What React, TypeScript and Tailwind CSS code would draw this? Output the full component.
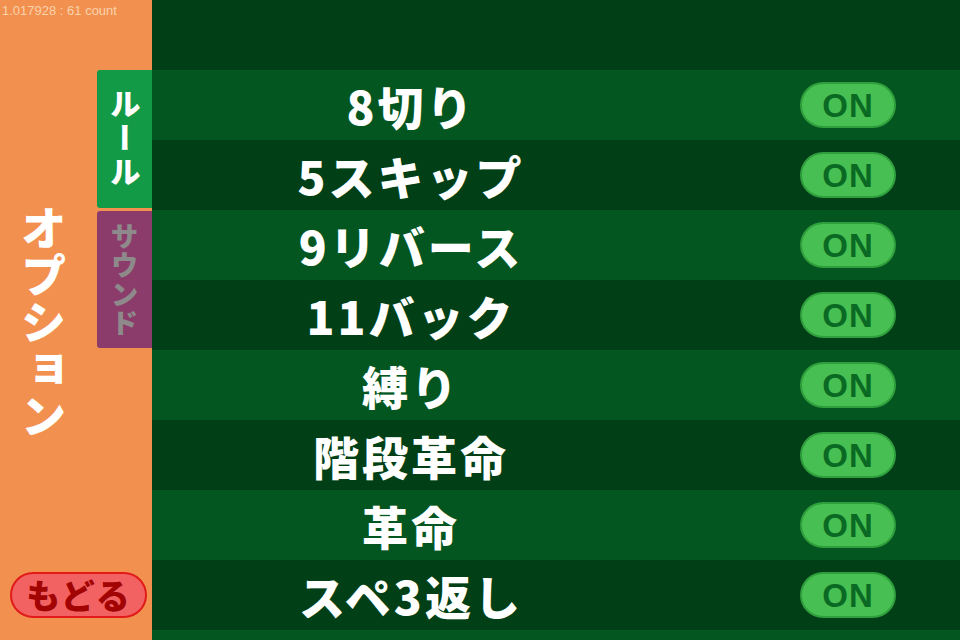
import React from "react";

const rules = [
  "8切り",
  "5スキップ",
  "9リバース",
  "11バック",
  "縛り",
  "階段革命",
  "革命",
  "スペ3返し",
];

const jp = "font-['Noto_Sans_CJK_JP','Noto_Sans',sans-serif]";

function OnButton() {
  return (
    <div className="flex h-[46px] w-[96px] items-center justify-center rounded-full border-2 border-[#2f9e3c] bg-[#47bf52]">
      <span className="font-['Liberation_Sans',Arial,sans-serif] text-[33px] font-bold leading-none tracking-[1px] text-[#0a6923]">
        ON
      </span>
    </div>
  );
}

function RuleRow({ label, dark }: { label: string; dark: boolean }) {
  return (
    <div
      className={`flex h-[70px] shrink-0 items-center pr-[64px] ${
        dark ? "bg-[#013f16]" : "bg-[#03561f]"
      }`}
    >
      <div
        className={`w-[518px] text-center text-[46px] font-black leading-none tracking-[3px] text-white ${jp}`}
      >
        {label}
      </div>
      <div className="flex-1" />
      <OnButton />
    </div>
  );
}

export default function App() {
  return (
    <div className="relative flex h-[640px] w-[960px] overflow-hidden">
      <div className="absolute left-[2px] top-[3px] font-['Liberation_Sans',Arial,sans-serif] text-[13px] leading-[15px] text-[#f9d2ac]">
        1.017928 : 61 count
      </div>

      {/* side menu */}
      <div className="grid w-[152px] shrink-0 grid-cols-[97px_55px] grid-rows-[1fr_auto] bg-[#f2914f]">
        <div className="col-start-1 row-span-2 row-start-1 flex items-center justify-center pr-[10px] pt-[4px]">
          <div
            className={`text-[46px] font-black leading-[46px] tracking-[1px] text-white [writing-mode:vertical-rl] ${jp}`}
          >
            オプション
          </div>
        </div>

        <div className="col-start-2 row-start-1 flex flex-col gap-[3px] pt-[70px]">
          <div className="flex h-[138px] items-center justify-center rounded-l-[3px] bg-[#129a47]">
            <span
              className={`text-[31px] font-black leading-[34px] tracking-[3px] text-white [writing-mode:vertical-rl] ${jp}`}
            >
              ルール
            </span>
          </div>
          <div className="flex h-[137px] items-center justify-center rounded-l-[3px] bg-[#8c3c6a]">
            <span
              className={`text-[28px] font-black leading-[30px] tracking-[1px] text-[#8e8a8c] [writing-mode:vertical-rl] ${jp}`}
            >
              サウンド
            </span>
          </div>
        </div>

        <div className="col-span-2 col-start-1 row-start-2 pb-[22px] pl-[10px]">
          <div className="flex h-[46px] w-[137px] items-center justify-center rounded-full border-2 border-[#e11a1a] bg-[#f26262]">
            <span
              className={`text-[34px] font-black leading-none tracking-[1px] text-[#a20303] ${jp}`}
            >
              もどる
            </span>
          </div>
        </div>
      </div>

      {/* rule list */}
      <div className="flex flex-1 flex-col">
        <div className="h-[70px] shrink-0 bg-[#013f16]" />
        {rules.map((r, i) => (
          <RuleRow key={r} label={r} dark={i % 2 === 1} />
        ))}
        <div className="h-[70px] shrink-0 bg-[#03561f]" />
      </div>
    </div>
  );
}
